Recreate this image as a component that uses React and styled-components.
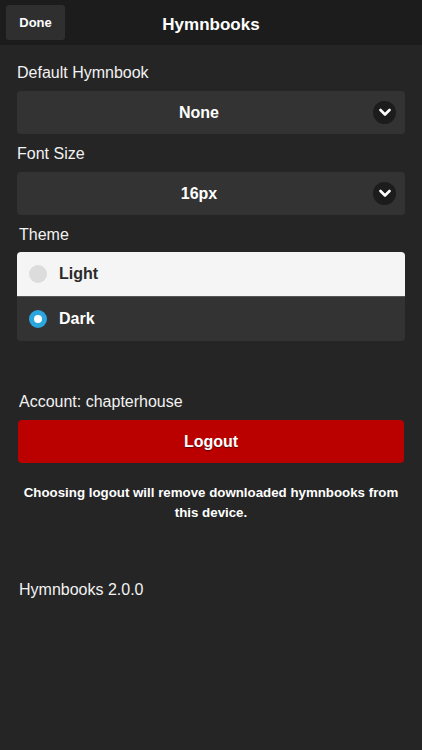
import React from 'react'
import styled, { createGlobalStyle } from 'styled-components'

const GlobalStyle = createGlobalStyle`
    html, body {
        margin: 0;
        padding: 0;
        background: #252525;
    }
    body {
        font-family: 'Liberation Sans', Arial, sans-serif;
        color: #ffffff;
    }
`

const Page = styled.div`
    width: 422px;
    min-height: 750px;
    background: #252525;
`

const Header = styled.div`
    height: 45px;
    background: #1c1c1c;
    display: flex;
    align-items: center;
    position: relative;
    padding-left: 6px;
    box-sizing: border-box;
`

const DoneButton = styled.button`
    width: 59px;
    height: 35px;
    background: #2f2f2f;
    border: none;
    border-radius: 3px;
    color: #fff;
    font-family: 'Liberation Sans', Arial, sans-serif;
    font-weight: 700;
    font-size: 13px;
    padding: 0;
`

const Title = styled.div`
    position: absolute;
    left: 0;
    right: 0;
    top: 2px;
    height: 45px;
    line-height: 45px;
    text-align: center;
    font-weight: 700;
    font-size: 17px;
    pointer-events: none;
`

const Content = styled.div`
    padding: 19px 17px 0 17px;
    display: flex;
    flex-direction: column;
`

const Label = styled.div`
    font-size: 16px;
    color: #f2f2f2;
    padding-left: ${props => props.indent || 0}px;
    margin-bottom: ${props => props.gap || 9}px;
    margin-top: ${props => props.top || 0}px;
`

const Select = styled.div`
    height: 43px;
    background: #333333;
    border-radius: 4px;
    display: flex;
    align-items: center;
    justify-content: center;
    padding-right: 24px;
    position: relative;
    font-weight: 700;
    font-size: 16px;
    margin-bottom: 11px;
`

const Chevron = styled.div`
    position: absolute;
    right: 9px;
    top: 10px;
    width: 23px;
    height: 23px;
    border-radius: 50%;
    background: #1c1c1c;
    display: flex;
    align-items: center;
    justify-content: center;
`

const RadioGroup = styled.div`
    border-radius: 4px;
    overflow: hidden;
    display: flex;
    flex-direction: column;
`

const RadioRow = styled.div`
    height: 44px;
    display: flex;
    align-items: center;
    padding-left: 12px;
    background: ${props => (props.light ? '#f5f5f5' : '#333333')};
    color: ${props => (props.light ? '#2a2a2a' : '#ffffff')};
    font-weight: 700;
    font-size: 16px;
    border-top: ${props => (props.light ? 'none' : '1px solid #555')};
`

const Radio = styled.div`
    width: 18px;
    height: 18px;
    border-radius: 50%;
    background: ${props => (props.checked ? '#2ba6de' : '#dcdcdc')};
    display: flex;
    align-items: center;
    justify-content: center;
    margin-right: 12px;
    &::after {
        content: '';
        display: ${props => (props.checked ? 'block' : 'none')};
        width: 8px;
        height: 8px;
        border-radius: 50%;
        background: #fff;
    }
`

const LogoutButton = styled.button`
    height: 43px;
    background: #bb0000;
    border: none;
    border-radius: 4px;
    color: #fff;
    font-family: 'Liberation Sans', Arial, sans-serif;
    font-weight: 700;
    font-size: 16px;
    text-shadow: 0 1px 1px rgba(0,0,0,0.5);
    margin: 0 1px;
`

const Note = styled.div`
    text-align: center;
    font-weight: 700;
    font-size: 13.3px;
    line-height: 20px;
    margin-top: 20px;
    padding: 0 4px;
`

const Version = styled.div`
    font-size: 16px;
    color: #f2f2f2;
    padding-left: 2px;
    margin-top: 58px;
`

const ChevronIcon = () => (
    <svg width="12" height="9" viewBox="0 0 12 9">
        <path d="M1.5 2 L6 6.5 L10.5 2" fill="none" stroke="#fff" strokeWidth="2.6" strokeLinecap="round" strokeLinejoin="round" />
    </svg>
)

export default function App() {
    return <Page>
        <GlobalStyle />
        <Header>
            <DoneButton>Done</DoneButton>
            <Title>Hymnbooks</Title>
        </Header>

        <Content>
            <Label>Default Hymnbook</Label>
            <Select>
                None
                <Chevron><ChevronIcon /></Chevron>
            </Select>

            <Label>Font Size</Label>
            <Select>
                16px
                <Chevron><ChevronIcon /></Chevron>
            </Select>

            <Label indent={2} gap={8}>Theme</Label>
            <RadioGroup>
                <RadioRow light><Radio />Light</RadioRow>
                <RadioRow><Radio checked />Dark</RadioRow>
            </RadioGroup>

            <Label indent={2} top={52}>Account: chapterhouse</Label>
            <LogoutButton>Logout</LogoutButton>
            <Note>Choosing logout will remove downloaded hymnbooks from this device.</Note>

            <Version>Hymnbooks 2.0.0</Version>
        </Content>
    </Page>
}
